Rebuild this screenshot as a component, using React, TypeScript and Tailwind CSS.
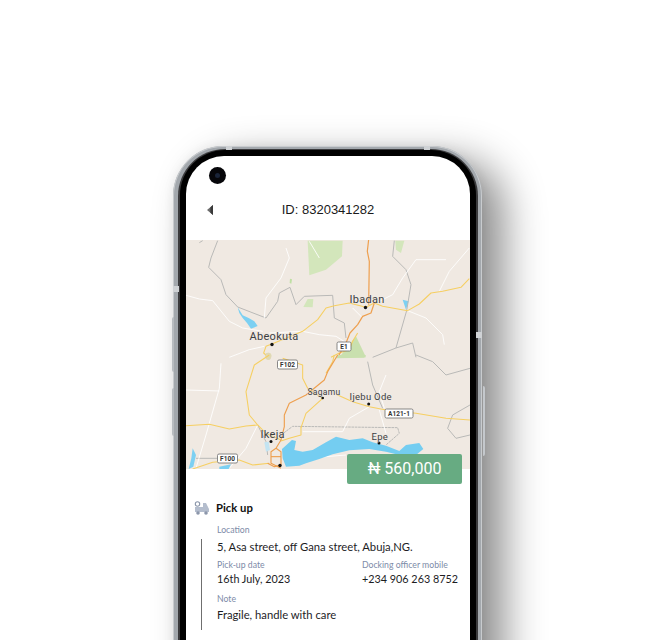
const roadsNorth = [
  "M548 5 L544 40 L550 70 L548 200",
  "M565 195 L555 225 L530 235 L515 260 L492 285 L480 315 L455 358",
];
const yellowNorth = [
  "M850 122 L825 148 L770 160 L735 165 L700 198 L665 218 L590 205 L565 195 L540 208 L490 195 L445 203 L420 210 L395 245 L350 280 L265 315 L240 325 L233 345 L250 360",
  "M515 285 L500 310 L490 335 L460 345 L435 358",
];
const whiteNorth = [
  "M300 30 L310 60 L285 120 L240 180 L235 240",
  "M0 172 L40 183 L80 188 L130 250 L170 270 L230 280",
  "M250 285 L350 280 L400 290 L450 295 L490 320",
  "M130 358 L190 335 L235 325",
  "M850 30 L790 100 L760 160",
  "M780 65 L690 65 L650 120 L620 170 L570 195",
  "M665 218 L720 240 L770 290 L775 320",
  "M500 210 L530 240",
  "M370 10 L400 60",
];
const grayNorth = [
  "M95 8 L75 60 L68 88 L105 125 L120 170 L155 207 L240 240 L275 190 L280 165 L312 148 L330 200 L355 175 L440 172 L445 240 L475 255 L480 300",
  "M40 14 L50 8",
  "M625 8 L620 55 L660 95 L675 140 L662 218 L630 330 L680 315 L690 358",
  "M630 330 L560 358",
];
const yellowSouth = [
  "M250 0 L205 30 L180 110 L190 180 L215 210 L180 213 L130 222 L70 208 L0 212",
  "M215 210 L240 235 L285 255",
  "M345 215 L345 240 L310 250 L285 258",
  "M290 10 L350 30 L350 70 L365 100 L410 130 L360 175 L345 218",
  "M420 55 L440 20 L445 0",
  "M450 118 L500 140 L550 155 L600 165 L690 175 L780 190 L852 195",
  "M20 342 L80 322 L160 315 L200 330 L250 325",
];
const whiteSouth = [
  "M105 25 L100 100 L60 240 L30 340",
  "M0 105 L100 108",
  "M550 155 L490 190 L470 230 L350 230",
  "M580 165 L600 235",
  "M600 60 L580 110 L595 160",
  "M360 310 L480 300",
  "M215 210 L180 280 L130 340",
];
const graySouth = [
  "M690 0 L740 20 L780 60 L852 40",
  "M852 150 L800 180 L785 220 L810 250 L852 240",
  "M545 20 L560 90 L590 160",
  "M285 240 L320 214 L635 218 L640 235 L600 270",
  "M30 310 L95 310",
  "M215 210 L240 260 L245 300",
];
const orangeSouth = [
  "M455 0 L425 50 L415 75 L360 120 L310 145 L295 180 L295 215 L285 255 L270 280 L255 290 L255 325 L285 340",
  "M270 280 L285 290 L285 330 L265 335 L245 325",
  "M255 305 L285 305",
];

function MapLabel({ x, y, size, children }: { x: number; y: number; size: number; children: string }) {
  return (
    <text x={x} y={y} fontSize={size} fill="#3d3f42" stroke="#f0e9e2" strokeWidth={0.6} paintOrder="stroke" fontFamily="Roboto, sans-serif" letterSpacing={0.3}>
      {children}
    </text>
  );
}

function Shield({ x, y, w, label }: { x: number; y: number; w: number; label: string }) {
  return (
    <g>
      <rect x={x} y={y} width={w} height={9} rx={1.5} fill="#fff" stroke="#6b6b6b" strokeWidth={0.8} />
      <text x={x + w / 2} y={y + 6.8} fontSize={6.5} fontWeight={700} textAnchor="middle" fill="#333" fontFamily="Roboto, sans-serif">
        {label}
      </text>
    </g>
  );
}

function MapArt() {
  return (
    <svg viewBox="0 0 284 229" className="block h-[229px] w-[284px] bg-[#f0e9e2]">
      {/* top half traced at 3x, offset so it lines up with the lower half */}
      <g transform="translate(0 -2) scale(0.3333)">
        <path d="M365 8 H470 L468 55 L420 95 L370 112 Z" fill="#d3e6bb" />
        <path d="M628 8 H655 L645 45 L630 35 Z" fill="#d3e6bb" />
        <path d="M312 122 L318 124 L316 137 L311 135 Z" fill="#bfe0a4" />
        <path d="M365 183 L382 183 L380 208 L352 207 Z" fill="#d3e6bb" />
        <path d="M510 295 L540 358 H460 Z" fill="#c9e0ae" />
        <ellipse cx="247" cy="352" rx="9" ry="8" fill="#e0d9b4" />
        <path d="M155 208 L170 232 L188 240 L205 250 L215 264 L195 272 L183 255 L170 240 L160 225 Z" fill="#7cd0f2" />
        <path d="M650 185 L668 190 L660 215 L655 200 Z" fill="#7cd0f2" />
        {grayNorth.map(d => <path key={d} d={d} fill="none" stroke="#b9b9b7" strokeWidth={3} strokeLinejoin="round" />)}
        {whiteNorth.map(d => <path key={d} d={d} fill="none" stroke="#fff" strokeWidth={2.6} strokeLinejoin="round" />)}
        {yellowNorth.map(d => <path key={d} d={d} fill="none" stroke="#f6cf62" strokeWidth={3.2} strokeLinejoin="round" />)}
        {roadsNorth.map(d => <path key={d} d={d} fill="none" stroke="#ee9f4e" strokeWidth={3.6} strokeLinejoin="round" />)}
      </g>
      <g transform="translate(0 115) scale(0.3333)">
        <path d="M455 0 H540 L535 8 L450 10 Z" fill="#c9e0ae" />
        <ellipse cx="247" cy="4" rx="9" ry="11" fill="#e0d9b4" />
        {graySouth.map(d => <path key={d} d={d} fill="none" stroke="#b9b9b7" strokeWidth={3} strokeDasharray={d.startsWith("M285") ? "8 2" : undefined} />)}
        {whiteSouth.map(d => <path key={d} d={d} fill="none" stroke="#fff" strokeWidth={2.6} strokeLinejoin="round" />)}
        <path
          d="M288 282 L318 255 L330 258 L325 285 L350 290 L380 285 L420 262 L450 245 L490 255 L530 250 L560 262 L600 272 L640 288 L660 270 L700 264 L712 282 L690 300 L640 300 L600 290 L550 282 L490 286 L440 298 L400 312 L360 325 L340 332 L300 335 L290 310 Z"
          fill="#74cdf1"
        />
        <path d="M20 280 L30 300 L22 335 L8 342 L16 310 Z" fill="#7cd0f2" />
        <path d="M100 335 L135 328 L128 342 H100 Z" fill="#7cd0f2" />
        <path d="M235 262 L248 260 L252 285 L240 290 Z" fill="#c3e4f2" />
        {yellowSouth.map(d => <path key={d} d={d} fill="none" stroke="#f6cf62" strokeWidth={3.2} strokeLinejoin="round" />)}
        {orangeSouth.map(d => <path key={d} d={d} fill="none" stroke="#ee9f4e" strokeWidth={3.4} strokeLinejoin="round" />)}
      </g>
      {/* city dots */}
      <circle cx={179.5} cy={67.5} r={1.7} fill="#111" />
      <circle cx={86} cy={104.5} r={1.7} fill="#111" />
      <circle cx={136.7} cy={158} r={1.3} fill="#111" />
      <circle cx={182.7} cy={164} r={1.5} fill="#111" />
      <circle cx={85} cy={201.5} r={1.5} fill="#111" />
      <circle cx={193} cy={203} r={1.5} fill="#111" />
      <circle cx={94} cy={225.5} r={1.7} fill="#111" />
      <MapLabel x={163.5} y={63} size={11}>Ibadan</MapLabel>
      <MapLabel x={63.5} y={100} size={11}>Abeokuta</MapLabel>
      <MapLabel x={121.5} y={155} size={8.5}>Sagamu</MapLabel>
      <MapLabel x={163.5} y={160} size={9.5}>Ijebu Ode</MapLabel>
      <MapLabel x={74.5} y={198} size={11}>Ikeja</MapLabel>
      <MapLabel x={185.5} y={200} size={9.5}>Epe</MapLabel>
      <Shield x={151} y={102} w={14} label="E1" />
      <Shield x={91.5} y={120} w={20} label="F102" />
      <Shield x={31.5} y={214} w={20} label="F100" />
      <Shield x={199} y={169} w={28} label="A121-1" />
    </svg>
  );
}

function Label({ children }: { children: string }) {
  return <p className="whitespace-nowrap text-[8.7px] leading-[12px] text-[#7d8ba8]">{children}</p>;
}

function Value({ children, small }: { children: string; small?: boolean }) {
  return (
    <p className={`whitespace-nowrap leading-[16px] text-[#1d1d1f] ${small ? "text-[10.8px]" : "text-[11.25px]"}`}>
      {children}
    </p>
  );
}

function TruckIcon() {
  return (
    <svg viewBox="0 0 16 14" className="h-[14px] w-[16px]">
      <circle cx={3.5} cy={3} r={2.2} fill="#fff" stroke="#8c97ab" strokeWidth={1.1} />
      <path d="M1 6 H9 V2 H12 L15 8 V11 H1 Z" fill="#b4bdcd" />
      <circle cx={4} cy={12} r={1.8} fill="#8c97ab" />
      <circle cx={12} cy={12} r={1.8} fill="#8c97ab" />
    </svg>
  );
}

export default function App() {
  return (
    <div className="h-[640px] w-[656px] overflow-hidden bg-white pl-[173px] pt-[146px] font-['Lato',sans-serif]">
      <div className="relative w-[309px]">
        {/* side buttons */}
        <div className="absolute right-[-3px] top-[240px] h-[70px] w-[2px] rounded-r bg-[#c4c8cc]" />
        <div className="absolute left-[-1px] top-[171px] h-[55px] w-[2px] rounded-l bg-[#b8bcc0]" />
        <div className="absolute left-[-1px] top-[242px] h-[48px] w-[2px] rounded-l bg-[#b8bcc0]" />
        {/* antenna bands */}
        <div className="absolute left-[53px] top-0 z-10 h-[4px] w-[6px] bg-[#cfd2d5]" />
        <div className="absolute right-[52px] top-0 z-10 h-[4px] w-[6px] bg-[#cfd2d5]" />
        <div className="absolute left-0 top-[140px] z-10 h-[6px] w-[6px] bg-[#cfd2d5]" />
        <div className="absolute right-0 top-[186px] z-10 h-[6px] w-[6px] bg-[#cfd2d5]" />

        <div className="h-[600px] rounded-[50px] bg-[#a3a8ad] pl-[5px] pr-[4px] pt-[3px] shadow-[22px_14px_40px_rgba(0,0,0,0.45),0_0_12px_rgba(0,0,0,0.06),inset_0_0_0_1px_#c8cbce]">
          <div className="h-full rounded-[47px] bg-[#3a3a3c] px-[2px] pt-[1px]">
            <div className="h-full rounded-[45px] bg-black px-[6px] pt-[6px]">
              <div className="relative h-full overflow-hidden rounded-[38px] bg-white">
                <div className="absolute left-[23px] top-[11px] flex h-[17px] w-[17px] items-center justify-center rounded-full bg-[#07070a]">
                  <div className="h-[5px] w-[5px] rounded-full bg-[#1a2438]" />
                </div>
                <header className="grid h-[84px] grid-cols-[1fr_auto_1fr] items-center px-[21px] pt-[24px] font-['Liberation_Sans',sans-serif]">
                  <svg viewBox="0 0 7 10" className="h-[10px] w-[7px]">
                    <path d="M6 0 V10 L0 5 Z" fill="#6b6b6b" />
                    <path d="M6 0 V10 L3.4 7.8 V2.2 Z" fill="#3a3a3a" />
                  </svg>
                  <h1 className="text-[13px] leading-[20px] text-[#1a1a1a]">ID: 8320341282</h1>
                </header>
                <MapArt />
                <div className="absolute left-[161px] top-[298px] flex h-[30px] w-[115px] items-center justify-center rounded-[2px] bg-[#67ab82] font-['Roboto',sans-serif] text-[16px] text-white">
                  ₦ 560,000
                </div>
                <section className="pl-[8px] pt-[31px]">
                  <div className="flex items-center gap-[6px]">
                    <TruckIcon />
                    <h2 className="text-[11.3px] font-bold leading-[16px] text-[#111]">Pick up</h2>
                  </div>
                  <div className="ml-[23px] mt-[8px]">
                    <Label>Location</Label>
                    <div className="ml-[-16px] mt-[3px] h-[91px] border-l border-[#6f6f6f] pl-[15px]">
                      <Value>5, Asa street, off Gana street, Abuja,NG.</Value>
                      <div className="mt-[4px] flex">
                        <div className="w-[145px] shrink-0">
                          <Label>Pick-up date</Label>
                          <Value small>16th July, 2023</Value>
                        </div>
                        <div>
                          <Label>Docking officer mobile</Label>
                          <Value small>+234 906 263 8752</Value>
                        </div>
                      </div>
                      <div className="mt-[6px]">
                        <Label>Note</Label>
                        <div className="mt-[2px]"><Value>Fragile, handle with care</Value></div>
                      </div>
                    </div>
                  </div>
                </section>
              </div>
            </div>
          </div>
        </div>
      </div>
    </div>
  );
}
